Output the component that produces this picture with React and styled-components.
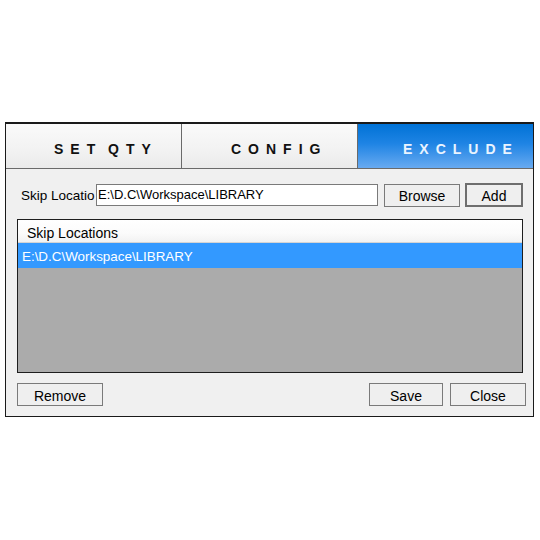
import React from 'react';
import styled, { createGlobalStyle } from 'styled-components';

const GlobalStyle = createGlobalStyle`
  body {
    margin: 0;
    background: #ffffff;
    font-family: "Liberation Sans", Arial, sans-serif;
  }
`;

const Frame = styled.div`
  margin: 122px 0 0 5px;
  width: 527px;
  border: 1px solid #1a1a1a;
  border-top-width: 2px;
  background: #f0f0f0;
`;

const TabBar = styled.div`
  display: flex;
  height: 44px;
  border-bottom: 1px solid #6a6a6a;
`;

const Tab = styled.div`
  flex: 0 0 175px;
  display: flex;
  align-items: center;
  padding: 6px 0 0 ${(p) => p.$pad}px;
  box-sizing: border-box;
  font-size: 14px;
  font-weight: bold;
  letter-spacing: 7px;
  word-spacing: -5px;
  white-space: nowrap;
  color: ${(p) => (p.$active ? '#eaf4ff' : '#111')};
  background: ${(p) =>
    p.$active
      ? 'linear-gradient(to bottom, #0072d6 0%, #1f84e4 45%, #68aaf0 100%)'
      : 'linear-gradient(to bottom, #fafafa 0%, #f2f2f2 60%, #eaeaea 100%)'};
  & + & {
    flex-basis: 176px;
    border-left: 1px solid #6a6a6a;
  }
  &:last-child {
    flex: 1 1 auto;
  }
`;

const Body = styled.div`
  padding: 14px 7px 10px 11px;
`;

const PathRow = styled.div`
  display: flex;
  align-items: center;
  height: 24px;
`;

const Label = styled.span`
  width: 75px;
  margin-left: 4px;
  white-space: nowrap;
  font-size: 13.5px;
  color: #000;
`;

const PathInput = styled.div`
  width: 282px;
  height: 22px;
  box-sizing: border-box;
  border: 1px solid #7a7a7a;
  background: #fff;
  font-size: 13px;
  line-height: 20px;
  padding-left: 1px;
  color: #000;
  white-space: nowrap;
`;

const Button = styled.div`
  width: ${(p) => p.$w}px;
  height: ${(p) => (p.$default ? 24 : 23)}px;
  box-sizing: border-box;
  margin-left: ${(p) => p.$gap || 0}px;
  border: ${(p) => (p.$default ? '2px solid #6e6e6e' : '1px solid #7a7a7a')};
  background: #efefef;
  display: flex;
  align-items: center;
  justify-content: center;
  padding-top: 2px;
  font-size: 14px;
  color: #000;
`;

const List = styled.div`
  margin-top: 12px;
  width: 506px;
  height: 154px;
  box-sizing: border-box;
  border: 1px solid #1e1e1e;
  background: #ababab;
`;

const ListHeader = styled.div`
  height: 22px;
  border-bottom: 1px solid #d4d4d4;
  background: linear-gradient(to bottom, #ffffff 0%, #fbfbfb 60%, #f2f2f2 100%);
  font-size: 14px;
  line-height: 26px;
  padding-left: 9px;
  color: #000;
`;

const ListRow = styled.div`
  height: 25px;
  background: ${(p) => (p.$selected ? '#3399ff' : 'transparent')};
  color: ${(p) => (p.$selected ? '#fff' : '#000')};
  font-size: 13.4px;
  line-height: 28px;
  padding-left: 4px;
`;

const Footer = styled.div`
  margin-top: 10px;
  display: flex;
  align-items: center;
`;

const Spacer = styled.div`
  flex: 1;
`;

const tabs = [
  { label: 'SET QTY' },
  { label: 'CONFIG' },
  { label: 'EXCLUDE', active: true },
];

export default function App() {
  const path = 'E:\\D.C\\Workspace\\LIBRARY';
  return (
    <>
      <GlobalStyle />
      <Frame>
        <TabBar>
          {tabs.map((t, i) => (
            <Tab key={t.label} $active={t.active} $pad={i === 2 ? 45 : i === 1 ? 49 : 48}>
              {t.label}
            </Tab>
          ))}
        </TabBar>
        <Body>
          <PathRow>
            <Label>Skip Locatio</Label>
            <PathInput>{path}</PathInput>
            <Button $w={76} $gap={6}>Browse</Button>
            <Button $w={58} $gap={5} $default>Add</Button>
          </PathRow>
          <List>
            <ListHeader>Skip Locations</ListHeader>
            <ListRow $selected>{path}</ListRow>
          </List>
          <Footer>
            <Button $w={86}>Remove</Button>
            <Spacer />
            <Button $w={74}>Save</Button>
            <Button $w={76} $gap={7}>Close</Button>
          </Footer>
        </Body>
      </Frame>
    </>
  );
}
